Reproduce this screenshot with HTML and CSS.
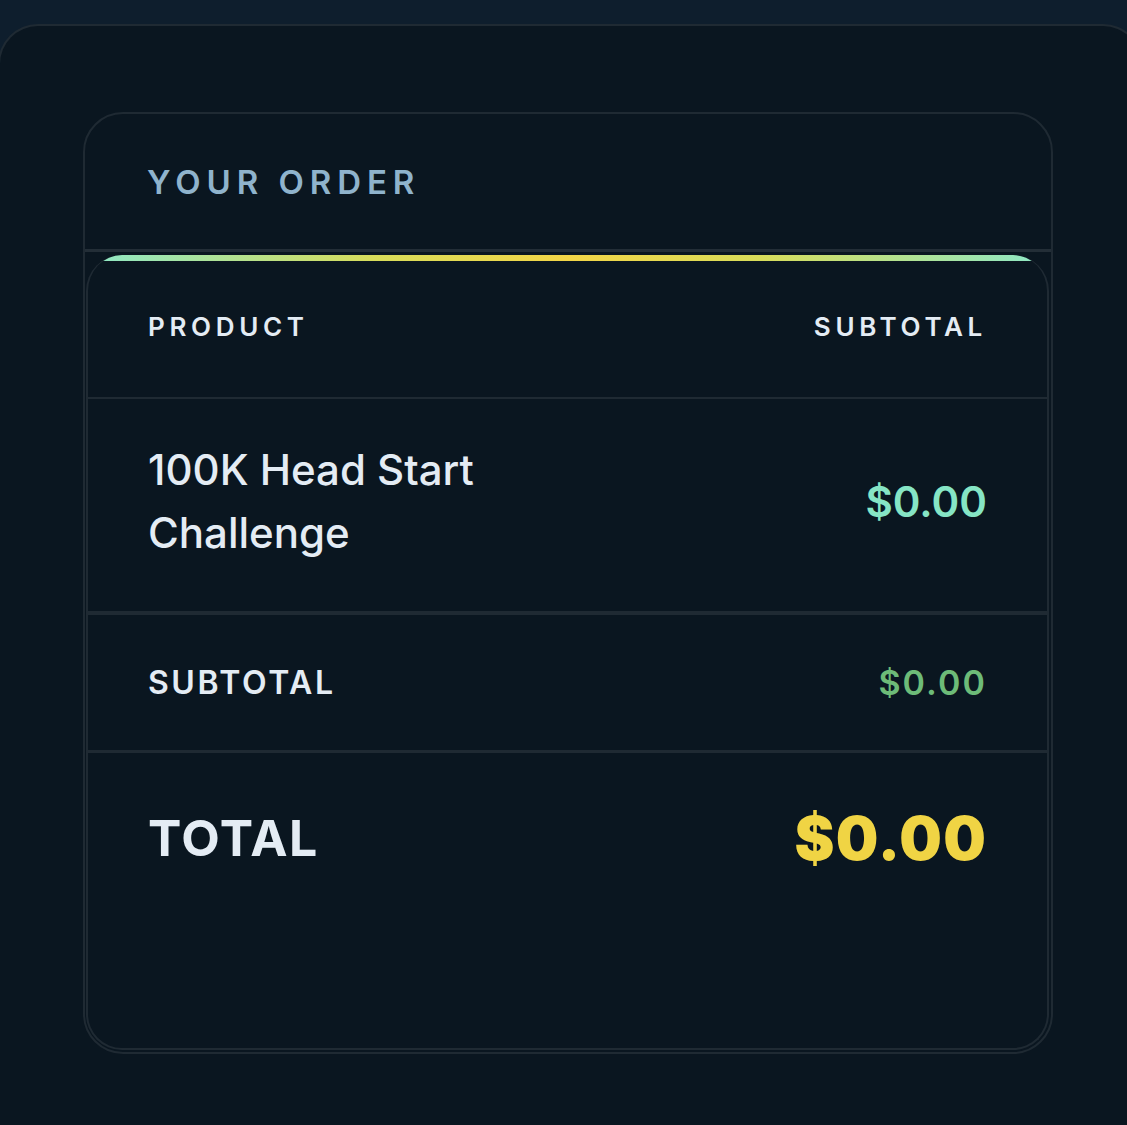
FILE: index.html
```html
<!DOCTYPE html>
<html lang="en">
<head>
  <meta charset="UTF-8" />
  <meta name="viewport" content="width=device-width, initial-scale=1.0"/>
  <title>Checkout</title>
  <link rel="stylesheet" href="styles.css">
</head>
<body>
  <div class="page">
    <div class="panel">
      <div class="order">
        <h3 class="order-title">Your order</h3>
        <div class="order-table">
          <div class="row row-head">
            <span>Product</span>
            <span>Subtotal</span>
          </div>
          <div class="row row-item">
            <span class="item-name">100K Head Start<br>Challenge</span>
            <span class="item-price">$0.00</span>
          </div>
          <div class="row row-sub">
            <span>Subtotal</span>
            <span class="sub-price">$0.00</span>
          </div>
          <div class="row row-total">
            <span>Total</span>
            <span class="total-price">$0.00</span>
          </div>
        </div>
      </div>
    </div>
  </div>
</body>
</html>
```

FILE: styles.css
```css
:root {
  --page-bg: #0e1e2d;
  --card-bg: #0a1620;
  --border: #1f2a33;
  --text: #e4ecf4;
  --label: #8fb3cc;
  --teal: #86e5c5;
  --green: #6dbb78;
  --yellow: #f0d444;
}

* {
  box-sizing: border-box;
}

body {
  margin: 0;
  background: var(--page-bg);
  font-family: 'Inter', 'Noto Sans', sans-serif;
  color: var(--text);
  overflow: hidden;
}

.page {
  padding-top: 24px;
  height: 1125px;
  overflow: hidden;
}

.panel {
  margin: 0 -16px 0 -2px;
  height: 1101px;
  background: var(--card-bg);
  border: 2px solid var(--border);
  border-bottom: none;
  border-radius: 40px 40px 0 0;
  padding: 86px 0 0 83px;
}

.order {
  width: 970px;
  height: 942px;
  border: 2px solid var(--border);
  border-radius: 40px;
  display: flex;
  flex-direction: column;
}

.order-title {
  margin: 0;
  height: 138px;
  display: flex;
  align-items: center;
  padding-left: 62px;
  font-size: 33px;
  font-weight: 600;
  letter-spacing: 0.18em;
  text-transform: uppercase;
  color: var(--label);
  border-bottom: 3px solid #232e37;
}

.order-table {
  position: relative;
  flex: 1;
  margin: 3px 2px 2px 1px;
  border: 2px solid var(--border);
  border-top: none;
  border-radius: 36px;
  overflow: hidden;
  display: flex;
  flex-direction: column;
  padding-top: 6px;
}

.order-table::before {
  content: "";
  position: absolute;
  top: 0;
  left: 0;
  right: 0;
  height: 6px;
  background: linear-gradient(90deg, #8de8c8, #d8dc5a 30%, #f2d547 50%, #d8dc5a 70%, #8de8c8);
}

.row {
  display: flex;
  align-items: center;
  justify-content: space-between;
  padding: 0 60px;
}

.row-head {
  height: 138px;
  padding-bottom: 6px;
  font-size: 26px;
  font-weight: 600;
  letter-spacing: 0.18em;
  text-transform: uppercase;
  border-bottom: 2px solid var(--border);
}

.row-item {
  height: 216px;
  padding-bottom: 8px;
  border-bottom: 4px solid var(--border);
}

.item-name {
  font-size: 42px;
  font-weight: 500;
  line-height: 63px;
}

.item-price {
  font-size: 42px;
  font-weight: 600;
  color: var(--teal);
}

.row-sub {
  height: 138px;
  font-size: 32px;
  font-weight: 600;
  letter-spacing: 0.08em;
  text-transform: uppercase;
  border-bottom: 3px solid var(--border);
}

.sub-price {
  font-size: 34px;
  letter-spacing: 0.06em;
  color: var(--green);
}

.row-total {
  height: 170px;
  font-size: 50px;
  font-weight: 700;
  letter-spacing: 0.03em;
  text-transform: uppercase;
}

.total-price {
  font-size: 60px;
  font-weight: 900;
  letter-spacing: 0.02em;
  color: var(--yellow);
}
```
